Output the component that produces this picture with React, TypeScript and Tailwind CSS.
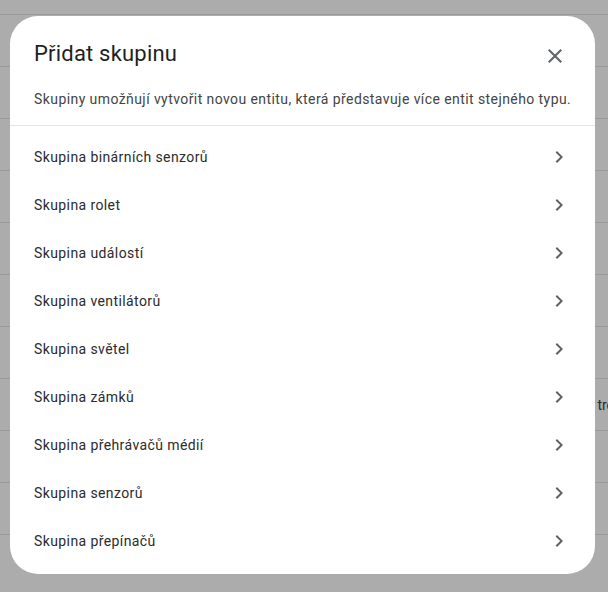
import React from 'react';

const groups = [
  'Skupina binárních senzorů',
  'Skupina rolet',
  'Skupina událostí',
  'Skupina ventilátorů',
  'Skupina světel',
  'Skupina zámků',
  'Skupina přehrávačů médií',
  'Skupina senzorů',
  'Skupina přepínačů',
];

const ChevronRight = () => (
  <svg viewBox="0 0 24 24" className="h-6 w-6 fill-[#5f6368]">
    <path d="M8.59,16.58L13.17,12L8.59,7.41L10,6L16,12L10,18L8.59,16.58Z" />
  </svg>
);

const CloseIcon = () => (
  <svg viewBox="0 0 24 24" className="h-6 w-6 fill-[#5f6368]">
    <path d="M19,6.41L17.59,5L12,10.59L6.41,5L5,6.41L10.59,12L5,17.59L6.41,19L12,13.41L17.59,19L19,17.59L13.41,12L19,6.41Z" />
  </svg>
);

const App = (): JSX.Element => {
  const rows = Array.from({ length: 10 });
  return (
    <div className="relative h-[592px] w-full overflow-hidden bg-[#acacac] font-['Roboto',sans-serif]">
      {/* page behind the scrim */}
      <div className="flex flex-col">
        <div className="h-[15px] border-b border-[#9a9a9a]" />
        {rows.map((_, i) => (
          <div key={i} className="flex h-[52px] items-center justify-end overflow-hidden border-b border-[#9a9a9a]">
            {i === 7 && <span className="mr-[-6px] text-sm text-[#2a2a2a]">tre</span>}
          </div>
        ))}
      </div>

      <div className="absolute left-[10px] top-[16px] flex h-[558px] w-[585px] flex-col rounded-[28px] bg-white">
        <div className="relative px-6 pt-6">
          <h2 className="text-[22px] leading-[28px] tracking-[0.2px] text-[#1f1f1f]">Přidat skupinu</h2>
          <button className="absolute right-4 top-4 flex h-12 w-12 items-center justify-center rounded-full">
            <CloseIcon />
          </button>
        </div>
        <p className="mt-[21px] whitespace-nowrap pl-6 text-sm leading-5 tracking-[0.42px] text-[#444444]">
          Skupiny umožňují vytvořit novou entitu, která představuje více entit stejného typu.
        </p>
        <div className="mt-4 border-t border-[#e3e3e3]" />
        <ul className="pt-[7px]">
          {groups.map((g) => (
            <li key={g} className="flex h-12 items-center justify-between px-6">
              <span className="text-sm tracking-[0.4px] text-[#2b2b2b]">{g}</span>
              <ChevronRight />
            </li>
          ))}
        </ul>
      </div>
    </div>
  );
};

export default App;
